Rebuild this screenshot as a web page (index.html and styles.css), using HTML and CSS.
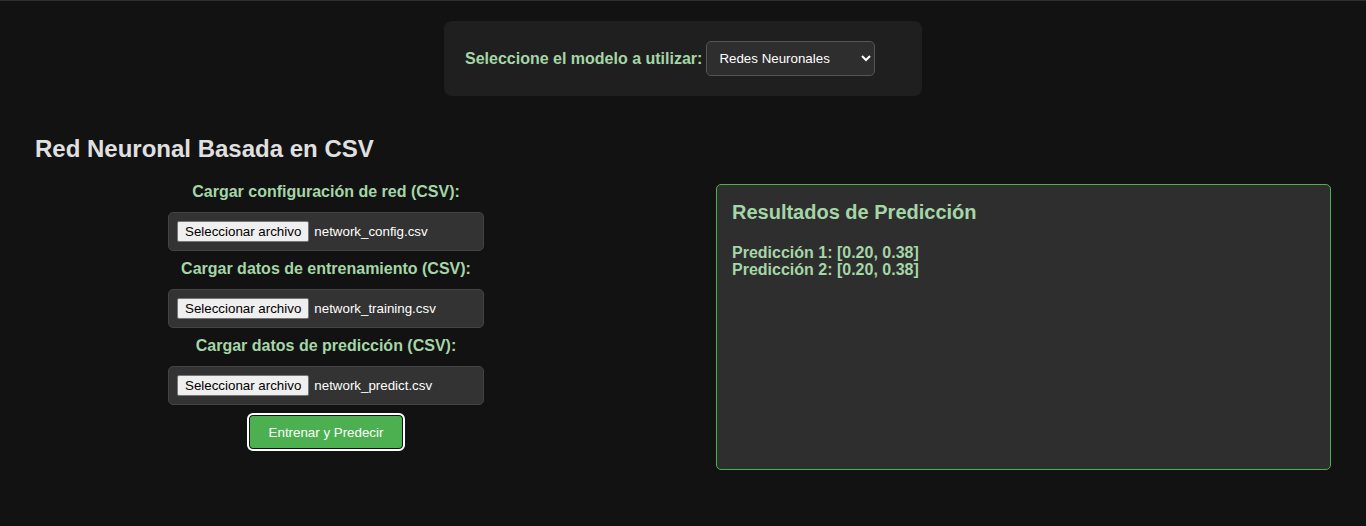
FILE: index.html
```html
<!DOCTYPE html>
<html lang="es">
<head>
<meta charset="utf-8">
<title>Red Neuronal</title>
<link rel="stylesheet" href="styles.css">
</head>
<body>
<div class="topline"></div>
<header class="model-bar">
  <div class="model-card">
    <label class="model-label" for="modelo">Seleccione el modelo a utilizar:</label>
    <div class="select-wrap">
      <select id="modelo" class="model-select">
        <option>Redes Neuronales</option>
      </select>
    </div>
  </div>
</header>
<main class="section">
  <h2 class="title">Red Neuronal Basada en CSV</h2>
  <div class="columns">
    <div class="form-col">
      <div class="field-label">Cargar configuración de red (CSV):</div>
      <div class="file-box"><span class="file-btn">Seleccionar archivo</span><span class="file-name">network_config.csv</span></div>
      <div class="field-label">Cargar datos de entrenamiento (CSV):</div>
      <div class="file-box"><span class="file-btn">Seleccionar archivo</span><span class="file-name">network_training.csv</span></div>
      <div class="field-label">Cargar datos de predicción (CSV):</div>
      <div class="file-box"><span class="file-btn">Seleccionar archivo</span><span class="file-name">network_predict.csv</span></div>
      <button class="train-btn">Entrenar y Predecir</button>
    </div>
    <div class="results">
      <h3 class="results-title">Resultados de Predicción</h3>
      <div class="pred">Predicción 1: [0.20, 0.38]</div>
      <div class="pred">Predicción 2: [0.20, 0.38]</div>
    </div>
  </div>
</main>
</body>
</html>
```
FILE: styles.css
```css
html, body {
  margin: 0;
  padding: 0;
  background: #121212;
  font-family: "Liberation Sans", Arial, sans-serif;
  color: #e0e0e0;
}
.topline {
  height: 1px;
  background: #2e2e2e;
}
.model-bar {
  display: flex;
  justify-content: center;
  padding-top: 20px;
}
.model-card {
  display: flex;
  align-items: center;
  gap: 4px;
  width: 478px;
  height: 75px;
  box-sizing: border-box;
  padding: 0 21px;
  background: #1f1f1f;
  border-radius: 8px;
}
.model-label {
  color: #a5d6a7;
  font-weight: bold;
  font-size: 16px;
}
.select-wrap {
  position: relative;
}
.model-select {
  width: 169px;
  height: 35px;
  background: #2e2e2e;
  color: #ffffff;
  border: 1px solid #555;
  border-radius: 5px;
  font-family: "Liberation Sans", Arial, sans-serif;
  font-size: 13.33px;
  padding: 0 8px;
  color-scheme: dark;
}
.section {
  padding: 0 35px;
}
.title {
  margin: 39px 0 0 0;
  font-size: 24px;
  font-weight: bold;
  color: #e0e0e0;
  line-height: 28px;
}
.columns {
  display: grid;
  grid-template-columns: 582px 615px;
  column-gap: 99px;
  margin-top: 20px;
  align-items: start;
}
.form-col {
  display: flex;
  flex-direction: column;
  align-items: center;
}
.field-label {
  color: #a5d6a7;
  font-weight: bold;
  font-size: 16px;
  line-height: 18px;
  margin-top: 9px;
  margin-bottom: 11px;
}
.field-label:first-child {
  margin-top: 0;
}
.file-box {
  display: flex;
  align-items: center;
  box-sizing: border-box;
  width: 316px;
  height: 39px;
  padding: 0 8px;
  background: #333;
  border: 1px solid #444;
  border-radius: 5px;
  font-size: 13.33px;
}
.file-btn {
  display: inline-block;
  box-sizing: border-box;
  height: 21px;
  line-height: 19px;
  padding: 0 7px;
  background: #efefef;
  color: #000;
  border: 1px solid #767676;
  border-radius: 2px;
}
.file-name {
  margin-left: 5px;
  color: #fff;
}
.train-btn {
  margin-top: 8px;
  width: 158px;
  height: 38px;
  background: #4caf50;
  color: #fff;
  font-family: "Liberation Sans", Arial, sans-serif;
  font-size: 13.33px;
  border: 2px solid #fff;
  border-radius: 6px;
  box-shadow: inset 0 0 0 1px #111;
}
.results {
  box-sizing: border-box;
  height: 286px;
  margin-top: 1px;
  padding: 16px 15px;
  background: #2e2e2e;
  border: 1px solid #4caf50;
  border-radius: 5px;
}
.results-title {
  margin: 0 0 20px 0;
  font-size: 20px;
  font-weight: bold;
  color: #a5d6a7;
  line-height: 23px;
}
.pred {
  color: #a5d6a7;
  font-weight: bold;
  font-size: 16px;
  line-height: 17px;
}
```
